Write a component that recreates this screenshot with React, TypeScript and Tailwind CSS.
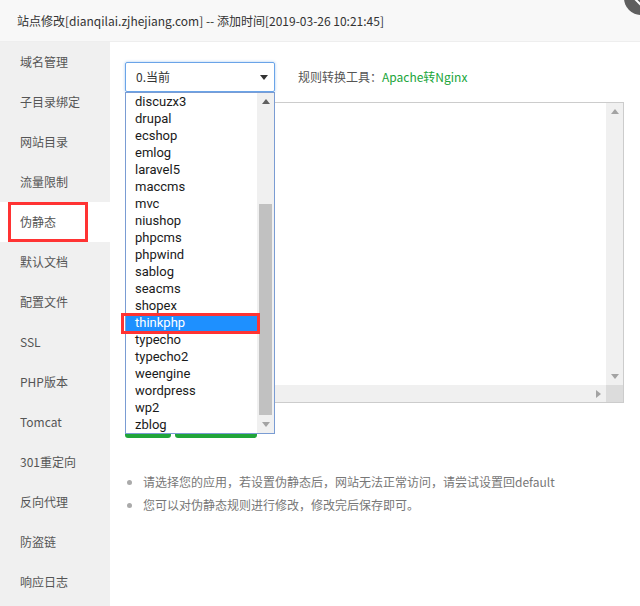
import React from 'react';

const NAV_ITEMS = [
  '域名管理',
  '子目录绑定',
  '网站目录',
  '流量限制',
  '伪静态',
  '默认文档',
  '配置文件',
  'SSL',
  'PHP版本',
  'Tomcat',
  '301重定向',
  '反向代理',
  '防盗链',
  '响应日志',
];

const REWRITE_OPTIONS = [
  'discuzx3',
  'drupal',
  'ecshop',
  'emlog',
  'laravel5',
  'maccms',
  'mvc',
  'niushop',
  'phpcms',
  'phpwind',
  'sablog',
  'seacms',
  'shopex',
  'thinkphp',
  'typecho',
  'typecho2',
  'weengine',
  'wordpress',
  'wp2',
  'zblog',
];

const Triangle: React.FC<{ dir: 'up' | 'down' | 'right'; className?: string }> = ({ dir, className }) => {
  const points =
    dir === 'up' ? '0,5 4,0 8,5' : dir === 'down' ? '0,0 8,0 4,5' : '0,0 5,4 0,8';
  const w = dir === 'right' ? 5 : 8;
  const h = dir === 'right' ? 8 : 5;
  return (
    <svg width={w} height={h} viewBox={`0 0 ${w} ${h}`} className={className}>
      <polygon points={points} fill="currentColor" />
    </svg>
  );
};

const RewriteDropdown: React.FC = () => {
  const selected = 'thinkphp';
  return (
    <div className="absolute left-[15px] top-[50px] w-[150px] h-[342px] border border-[#7a9cd3] bg-white flex">
      <ul className="flex-1 font-['Roboto',sans-serif]">
        {REWRITE_OPTIONS.map((name) => (
          <li
            key={name}
            className={`h-[17px] leading-[17px] pl-[9px] text-[13px] ${
              name === selected ? 'bg-[#1e90ff] text-white' : 'text-[#1a1a1a]'
            }`}
          >
            {name}
          </li>
        ))}
      </ul>
      <div className="w-[17px] bg-[#f0f0f0] flex flex-col items-center">
        <div className="h-[17px] flex items-center justify-center text-[#606060]">
          <Triangle dir="up" />
        </div>
        <div className="h-[94px]" />
        <div className="w-[13px] h-[211px] bg-[#c1c1c1]" />
        <div className="flex-1 flex items-center justify-center text-[#a3a3a3]">
          <Triangle dir="down" />
        </div>
      </div>
    </div>
  );
};

const RuleEditor: React.FC = () => (
  <div className="mt-[10px] w-[499px] h-[301px] border border-[#ccc] flex flex-col">
    <div className="flex-1 flex">
      <div className="flex-1" />
      <div className="w-[17px] bg-[#f0f0f0] flex flex-col items-center justify-between py-[6px] text-[#a3a3a3]">
        <Triangle dir="up" />
        <Triangle dir="down" />
      </div>
    </div>
    <div className="h-[17px] flex">
      <div className="flex-1 bg-[#f0f0f0] flex items-center justify-end pr-[5px] text-[#a3a3a3]">
        <Triangle dir="right" />
      </div>
      <div className="w-[17px] bg-[#dcdcdc]" />
    </div>
  </div>
);

export default function App() {
  return (
    <div className="relative w-[640px] h-[606px] overflow-hidden bg-white font-['Microsoft_YaHei','Noto_Sans_CJK_SC',sans-serif]">
      <div className="h-[42px] bg-[#f8f8f8] border-b border-[#eee] flex items-center pl-[17px] text-[12px] text-[#333]">
        站点修改[dianqilai.zjhejiang.com] -- 添加时间[2019-03-26 10:21:45]
      </div>
      <div className="absolute right-[-18px] top-[-19px] w-[34px] h-[34px] rounded-full bg-[#5f5f5f] flex items-center justify-center">
        <span className="absolute w-[14px] h-[2px] bg-white rotate-45 left-[7px] top-[20px]" />
      </div>

      <div className="flex h-[564px]">
        <ul className="w-[110px] bg-[#f0f0f0] text-[12px] text-[#555]">
          {NAV_ITEMS.map((item) => (
            <li
              key={item}
              className={`relative h-[40px] leading-[40px] pl-[20px] ${item === '伪静态' ? 'bg-white' : ''}`}
            >
              {item}
              {item === '伪静态' && (
                <span className="absolute left-[8px] top-0 w-[80px] h-[40px] border-[3px] border-[#f33]" />
              )}
            </li>
          ))}
        </ul>

        <div className="relative flex-1 pl-[15px] pt-[20px]">
          <div className="flex items-center">
            <div className="w-[150px] h-[30px] border border-[#6aa4e8] rounded-[2px] shadow-[0_0_3px_#a6c8f0] flex items-center justify-between pl-[10px] pr-[6px] text-[12px] text-[#333]">
              <span>0.当前</span>
              <Triangle dir="down" className="text-[#333]" />
            </div>
            <span className="ml-[23px] text-[12px] text-[#555]">
              规则转换工具：<span className="text-[#20a53a]">Apache转Nginx</span>
            </span>
          </div>

          <RuleEditor />

          {/* save / save-as-template buttons, mostly covered by the open list */}
          <div className="mt-[5px] flex gap-[4px]">
            <button className="w-[46px] h-[30px] rounded-[3px] bg-[#20a53a]" />
            <button className="w-[82px] h-[30px] rounded-[3px] bg-[#20a53a]" />
          </div>

          <ul className="mt-[32px] pl-[17px] text-[12px] text-[#777] leading-[23px] list-disc marker:text-[#aaa]">
            <li className="ml-[1px]">请选择您的应用，若设置伪静态后，网站无法正常访问，请尝试设置回default</li>
            <li className="ml-[1px]">您可以对伪静态规则进行修改，修改完后保存即可。</li>
          </ul>

          <RewriteDropdown />
          <span className="absolute left-[11px] top-[271px] w-[139px] h-[21px] border-[3px] border-[#f33]" />
        </div>
      </div>
    </div>
  );
}
